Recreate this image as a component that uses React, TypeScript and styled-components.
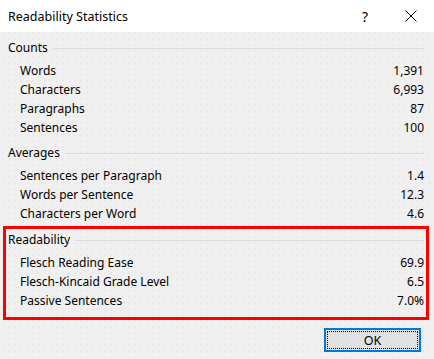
import React from "react";
import styled, { createGlobalStyle } from "styled-components";

const Global = createGlobalStyle`
  html, body { margin: 0; padding: 0; background: #f0f0f0; }
  body { font-family: "Noto Sans", "Liberation Sans", sans-serif; font-size: 12px; color: #000; }
`;

const Dialog = styled.div`
  width: 434px;
  height: 359px;
  display: flex;
  flex-direction: column;
  background-color: #f0f0f0;
  background-image: radial-gradient(circle, #e2e2e2 0.6px, transparent 0.8px);
  background-size: 6px 6px;
  box-sizing: border-box;
  overflow: hidden;
`;

const TitleBar = styled.div`
  height: 32px;
  background: #fff;
  display: flex;
  align-items: center;
  padding-left: 8px;
  flex-shrink: 0;
`;

const Title = styled.div`
  flex: 1;
  font-size: 12.5px;
`;

const TitleButton = styled.div<{ $w: number }>`
  width: ${(p) => p.$w}px;
  height: 32px;
  display: flex;
  align-items: center;
  justify-content: center;
`;

const Help = styled.span`
  font-size: 14px;
`;

const Body = styled.div`
  padding: 6px 10px 0 8px;
  display: flex;
  flex-direction: column;
`;

const Group = styled.div<{ $mt: number }>`
  display: flex;
  flex-direction: column;
  margin-top: ${(p) => p.$mt}px;
`;

const Highlight = styled.div`
  border: 3px solid #ff0000;
  margin: 0 -5px 0 -5px;
  padding: 1px 2px 7px 2px;
  display: flex;
  flex-direction: column;
`;

const Header = styled.div`
  height: 19px;
  display: flex;
  align-items: center;
  gap: 5px;
  margin-bottom: 4px;
`;

const Rule = styled.div`
  flex: 1;
  height: 1px;
  background: #dcdcdc;
  margin-top: 1px;
`;

const Row = styled.div`
  height: 19px;
  display: flex;
  align-items: center;
  justify-content: space-between;
  padding-left: 12px;
`;

const ButtonBar = styled.div`
  display: flex;
  justify-content: flex-end;
  padding: 8px 3px 0 0;
`;

const OkButton = styled.button`
  width: 97px;
  height: 24px;
  box-sizing: border-box;
  border: 2px solid #0078d7;
  background: #e1e1e1;
  padding: 1px;
  font-family: inherit;
  font-size: 12.5px;
  color: #000;
  display: flex;
`;

const Focus = styled.span`
  flex: 1;
  border: 1px dotted #000;
  display: flex;
  align-items: center;
  justify-content: center;
`;

type Item = [string, string];

const groups: { title: string; items: Item[]; mt: number; hl?: boolean }[] = [
  {
    title: "Counts",
    mt: 0,
    items: [
      ["Words", "1,391"],
      ["Characters", "6,993"],
      ["Paragraphs", "87"],
      ["Sentences", "100"],
    ],
  },
  {
    title: "Averages",
    mt: 6,
    items: [
      ["Sentences per Paragraph", "1.4"],
      ["Words per Sentence", "12.3"],
      ["Characters per Word", "4.6"],
    ],
  },
  {
    title: "Readability",
    mt: 3,
    hl: true,
    items: [
      ["Flesch Reading Ease", "69.9"],
      ["Flesch-Kincaid Grade Level", "6.5"],
      ["Passive Sentences", "7.0%"],
    ],
  },
];

function GroupContent({ title, items }: { title: string; items: Item[] }) {
  return (
    <>
      <Header>
        {title}
        <Rule />
      </Header>
      {items.map(([k, v]) => (
        <Row key={k}>
          <span>{k}</span>
          <span>{v}</span>
        </Row>
      ))}
    </>
  );
}

export default function App() {
  return (
    <>
      <Global />
      <Dialog>
        <TitleBar>
          <Title>Readability Statistics</Title>
          <TitleButton $w={46}>
            <Help>?</Help>
          </TitleButton>
          <TitleButton $w={46}>
            <svg width="12" height="12" viewBox="0 0 12 12">
              <path d="M0.5 0.5 L11.5 11.5 M11.5 0.5 L0.5 11.5" stroke="#000" strokeWidth="1" />
            </svg>
          </TitleButton>
        </TitleBar>
        <Body>
          {groups.map((g) => (
            <Group key={g.title} $mt={g.mt}>
              {g.hl ? (
                <Highlight>
                  <GroupContent title={g.title} items={g.items} />
                </Highlight>
              ) : (
                <GroupContent title={g.title} items={g.items} />
              )}
            </Group>
          ))}
          <ButtonBar>
            <OkButton>
              <Focus>OK</Focus>
            </OkButton>
          </ButtonBar>
        </Body>
      </Dialog>
    </>
  );
}
